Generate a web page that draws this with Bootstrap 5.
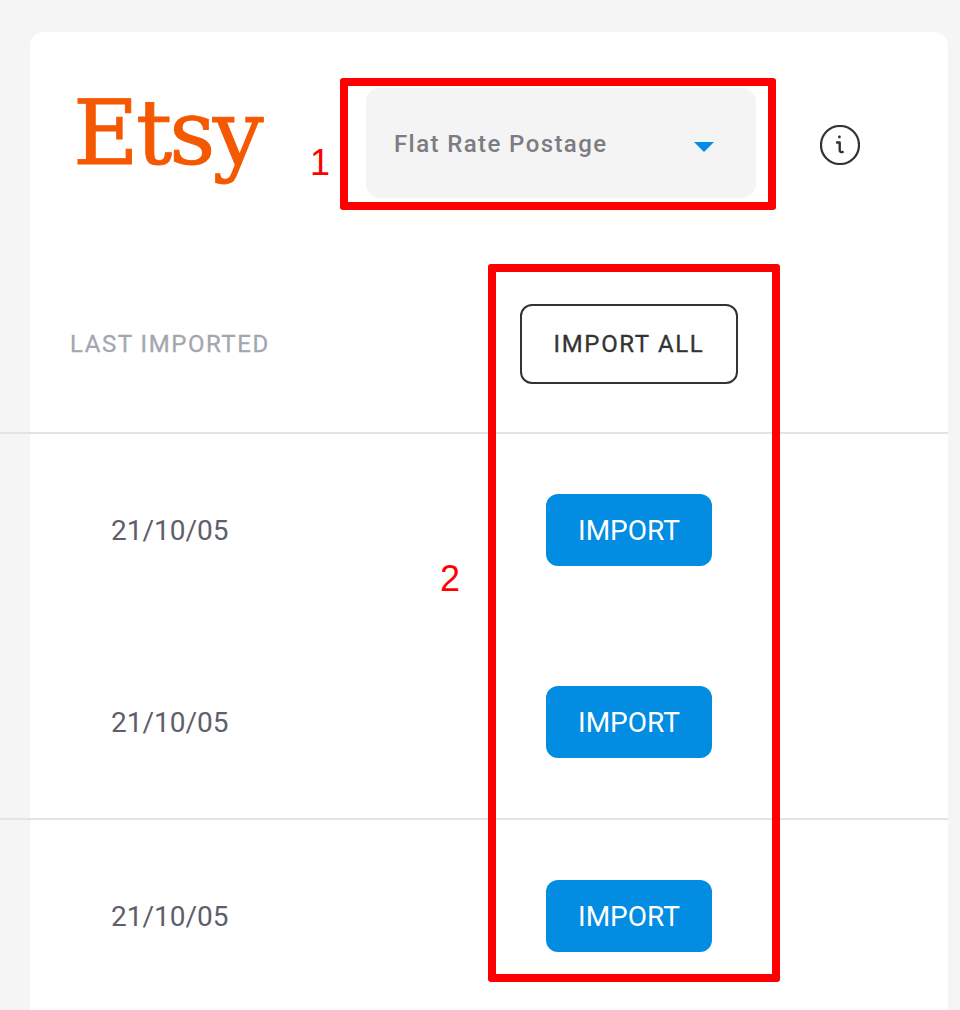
<!DOCTYPE html>
<html lang="en">
<head>
    <meta charset="UTF-8" />
    <meta name="viewport" content="width=device-width, initial-scale=1" />
    <title>Etsy import</title>
    <link href="https://cdn.jsdelivr.net/npm/bootstrap@5.3.0/dist/css/bootstrap.min.css" rel="stylesheet"/>
    <style>
        html, body { height: 1010px; overflow: hidden; }
        body { background: #f5f5f5; font-family: Roboto, sans-serif; position: relative; }
        .panel { margin: 32px 12px 0 30px; height: 978px; background: #fff; border-radius: 14px 14px 0 0; }
        .top-bar { padding-top: 56px; height: 272px; }
        .logo-cell { width: 336px; padding-left: 43px; height: 110px; }
        .etsy-logo { font-family: "DejaVu Serif", serif; font-size: 90px; line-height: 90px; color: #f45800; letter-spacing: -2.8px; -webkit-text-stroke: 0.9px #f45800; }
        .postage-select { width: 390px; height: 110px; background: #f4f4f5; border: 0; border-radius: 14px; padding: 2px 42px 0 28px; color: #7c7c82; font-size: 24px; font-weight: 500; letter-spacing: 1.4px; }
        .caret-down { width: 0; height: 0; border-left: 10px solid transparent; border-right: 10px solid transparent; border-top: 10px solid #038de2; margin-top: 6px; }
        .info-icon { margin: 37px 0 0 64px; }
        .date-col { width: 449px; }
        .action-col { width: 300px; }
        .head-row { height: 128px; }
        .head-label { padding-left: 40px; height: 80px; color: #a3a7ad; font-size: 24px; font-weight: 400; letter-spacing: 1.55px; -webkit-text-stroke: 0.3px #a3a7ad; }
        .import-all { width: 218px; height: 80px; padding: 0; border: 2px solid #333; border-radius: 12px; background: #fff; color: #333; font-size: 24px; font-weight: 400; letter-spacing: 1.65px; -webkit-text-stroke: 0.3px #333; }
        .rule { height: 2px; background: #e4e4e6; margin-left: -30px; }
        .rows { padding: 60px 0; gap: 120px; }
        .date-cell { padding: 2px 0 0 81px; color: #5f5f6b; font-size: 28px; }
        .import-one { width: 166px; height: 72px; padding: 2px 0 0; border: 0; border-radius: 12px; background: #038de2; color: #fff; font-size: 28px; }
        .note-box { position: absolute; border: 8px solid #f00; border-radius: 3px; }
        .note-num { position: absolute; color: #f00; font-family: "Liberation Sans", sans-serif; font-size: 36px; line-height: 40px; }
    </style>
</head>
<body>
<div class="panel">
    <div class="top-bar d-flex align-items-start">
        <div class="logo-cell"><div class="etsy-logo">Etsy</div></div>
        <button type="button" class="postage-select d-flex align-items-center justify-content-between">
            <span>Flat Rate Postage</span>
            <i class="caret-down"></i>
        </button>
        <svg class="info-icon" width="40" height="40" viewBox="0 0 40 40" fill="none" stroke="#333" stroke-width="2.2" stroke-linecap="round" stroke-linejoin="round">
            <circle cx="20" cy="20" r="19"/>
            <path d="M17 17.5h2.7v7.5c0 1.8 1 2.5 3 2" stroke-width="2.4"/>
            <circle cx="19.4" cy="12" r="1.4" fill="#333" stroke="none"/>
        </svg>
    </div>

    <div class="head-row d-flex align-items-start">
        <div class="date-col head-label d-flex align-items-center">LAST IMPORTED</div>
        <div class="action-col d-flex justify-content-center">
            <button type="button" class="btn import-all">IMPORT ALL</button>
        </div>
    </div>
    <div class="rule"></div>

    <div class="rows d-flex flex-column">
        <div class="d-flex align-items-center">
            <div class="date-col date-cell">21/10/05</div>
            <div class="action-col d-flex justify-content-center"><button type="button" class="btn import-one">IMPORT</button></div>
        </div>
        <div class="d-flex align-items-center">
            <div class="date-col date-cell">21/10/05</div>
            <div class="action-col d-flex justify-content-center"><button type="button" class="btn import-one">IMPORT</button></div>
        </div>
    </div>
    <div class="rule"></div>

    <div class="rows d-flex flex-column">
        <div class="d-flex align-items-center">
            <div class="date-col date-cell">21/10/05</div>
            <div class="action-col d-flex justify-content-center"><button type="button" class="btn import-one">IMPORT</button></div>
        </div>
    </div>
</div>

<!-- red annotations on top of the screenshot -->
<div class="note-box" style="left:340px;top:78px;width:436px;height:132px"></div>
<div class="note-box" style="left:488px;top:264px;width:292px;height:718px"></div>
<div class="note-num" style="left:310px;top:143px">1</div>
<div class="note-num" style="left:440px;top:559px">2</div>

<script src="https://cdn.jsdelivr.net/npm/bootstrap@5.3.0/dist/js/bootstrap.bundle.min.js"></script>
</body>
</html>
